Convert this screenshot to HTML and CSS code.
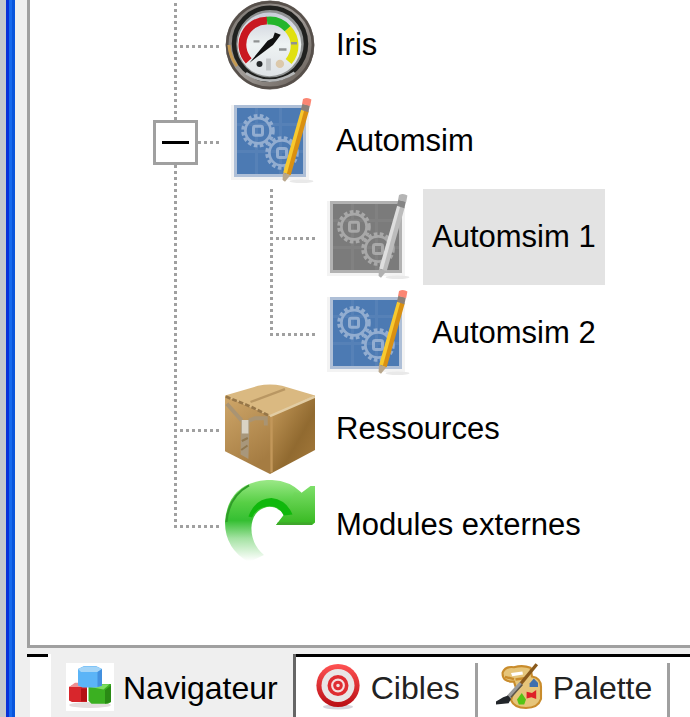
FILE: index.html
```
<!DOCTYPE html>
<html lang="fr">
<head>
  <meta charset="UTF-8" />
  <meta name="viewport" content="width=device-width, initial-scale=1.0"/>
  <title>Navigateur</title>
  <link rel="stylesheet" href="styles.css">
</head>
<body>

  <!-- Shared icon shapes -->
  <svg class="defs" width="0" height="0" aria-hidden="true">
    <symbol id="blueprint" viewBox="0 0 30 30">
      <path d="M2 3H28V28H2Z" fill="#f3f3f3"/>
      <rect class="sheet-edge" x="3" y="3" width="24" height="24"/>
      <rect class="sheet" x="4" y="4" width="22" height="22"/>
      <path class="sheet-grid" d="M10.5 4V26M18.5 4V26M4 9.5H26M4 18.5H26"/>
      <g class="gear">
        <circle cx="11" cy="11.6" r="5" stroke-width="1.2" stroke-dasharray="1.2 .8"/>
        <circle cx="11" cy="11.6" r="4.2" stroke-width=".9"/>
        <rect x="9.5" y="10.1" width="3" height="3" rx=".6" stroke-width="1"/>
        <circle cx="19" cy="19" r="5" stroke-width="1.2" stroke-dasharray="1.2 .8"/>
        <circle cx="19" cy="19" r="4.2" stroke-width=".9"/>
        <rect x="17.5" y="17.5" width="3" height="3" rx=".6" stroke-width="1"/>
      </g>
      <ellipse cx="25.5" cy="28.4" rx="4" ry=".6" fill="#e9e9e9"/>
      <path class="pencil-light" d="M25.4 4.5L27 5L21.3 26.2L19.4 25.5Z"/>
      <path class="pencil-dark" d="M26.4 4.8L27.9 5.2L21.9 26.4L20.6 26Z"/>
      <path class="pencil-tip" d="M19.3 25.5L21.8 26.4L20 28.6L19.2 28Z"/>
      <path class="ferrule" d="M25.8 2.6L28.3 3.2L27.8 5.4L25.3 4.6Z"/>
      <path class="eraser" d="M26 1Q27.5 .2 28.8 1.2L28.4 3.3L25.7 2.7Z"/>
    </symbol>
  </svg>

  <div class="window">
    <div class="frame"></div>
    <main class="content">
      <div class="panel">
        <ul class="tree">
          <li>
            <div class="row">
              <svg class="icon" viewBox="0 0 30 30" aria-hidden="true">
                <defs>
                  <linearGradient id="rim" x1="0" y1="0" x2="1" y2="1">
                    <stop offset="0" stop-color="#75706b"/>
                    <stop offset=".5" stop-color="#a09b97"/>
                    <stop offset="1" stop-color="#5e564f"/>
                  </linearGradient>
                  <linearGradient id="face" x1="0" y1="0" x2="0" y2="1">
                    <stop offset="0" stop-color="#c9ccd8"/>
                    <stop offset=".5" stop-color="#eef3f3"/>
                    <stop offset="1" stop-color="#dfe3e6"/>
                  </linearGradient>
                </defs>
                <circle cx="15" cy="15" r="14.8" fill="url(#rim)"/>
                <circle cx="15" cy="15" r="14.3" fill="none" stroke="#57504b" stroke-width=".9"/>
                <path d="M1.3 15Q1.6 19 4 22" fill="none" stroke="#c59a52" stroke-width="1"/>
                <circle cx="15" cy="14.6" r="12" fill="#8f9292" stroke="#20211f" stroke-width="1.5"/>
                <circle cx="14.8" cy="14.8" r="10.6" fill="url(#face)"/>
                <g fill="none" stroke-width="2.6">
                  <path d="M7.9 20.3A8 8 0 0 1 14 6.9" stroke="#c91820"/>
                  <path d="M14 6.9A8 8 0 0 1 20.9 9.6" stroke="#23b52b"/>
                  <path d="M20.9 9.6A8 8 0 0 1 21.2 20.5" stroke="#e0e010"/>
                </g>
                <path d="M22 14.4H24M18 16.5H20.5M9.5 13.8H11.5" stroke="#8f9292" stroke-width=".8"/>
                <path d="M8.2 20.9L14.2 13.6L16 12.6L16.6 10.8L18.6 11.6L17.4 13.2L16 15Z" fill="#111"/>
                <circle cx="11.5" cy="21.3" r="1" fill="#25292b"/>
                <path d="M14.5 19.5V23.5" stroke="#c2c6c8" stroke-width="1.6"/>
                <circle cx="18.3" cy="21.3" r="1.4" fill="#dcc9ab"/>
                <path d="M7 24.4Q15 29.5 23.2 24.2" fill="none" stroke="#b5b7b8" stroke-width=".9"/>
              </svg>
              <span class="label">Iris</span>
            </div>
          </li>
          <li>
            <div class="row">
              <button type="button" class="toggle" aria-label="Réduire Automsim" aria-expanded="true"></button>
              <svg class="icon" aria-hidden="true"><use href="#blueprint"/></svg>
              <span class="label">Automsim</span>
            </div>
            <ul>
              <li>
                <div class="row">
                  <svg class="icon disabled" aria-hidden="true"><use href="#blueprint"/></svg>
                  <span class="label selected">Automsim 1</span>
                </div>
              </li>
              <li>
                <div class="row">
                  <svg class="icon" aria-hidden="true"><use href="#blueprint"/></svg>
                  <span class="label">Automsim 2</span>
                </div>
              </li>
            </ul>
          </li>
          <li>
            <div class="row">
              <svg class="icon" viewBox="0 0 30 30" aria-hidden="true">
                <defs>
                  <linearGradient id="box-left" x1="0" y1="0" x2=".4" y2="1">
                    <stop offset="0" stop-color="#cfa76a"/>
                    <stop offset="1" stop-color="#a57c42"/>
                  </linearGradient>
                  <linearGradient id="box-right" x1="0" y1="0" x2="1" y2="1">
                    <stop offset="0" stop-color="#c89d5d"/>
                    <stop offset=".6" stop-color="#916a30"/>
                    <stop offset="1" stop-color="#a67b3c"/>
                  </linearGradient>
                </defs>
                <path d="M0 3.8L15 10.6V30L0 22.4Z" fill="url(#box-left)"/>
                <path d="M30 3.8L15 10.6V30L30 22Z" fill="url(#box-right)"/>
                <path d="M0 3.8L11 .6Q15 -.3 19 .6L30 3.8L15 10.7Z" fill="#dab981"/>
                <path d="M15 10.7L30 4.2" stroke="#e2cda4" stroke-width=".8"/>
                <path d="M15.5 11V29.5" stroke="#c2975a" stroke-width=".8"/>
                <path d="M8.5 6L20 1.7" stroke="#b99763" stroke-width=".8"/>
                <path d="M.3 4.2L8.7 7.6L14.5 10.5" fill="none" stroke="#967648" stroke-width=".9" stroke-dasharray="1.6 .7"/>
                <path d="M.6 6.6L5.6 12.2M8 12.2L10 11.4H13.6V13.8" fill="none" stroke="#a99473" stroke-width="1.3"/>
                <path d="M5.3 12H8.2L7.8 25L5.2 23.5Z" fill="#a8977b"/>
                <path d="M5.6 12H7.8V16.5H5.6Z" fill="#d9d3c5"/>
                <path d="M5.6 19L7.6 18M5.4 22L7.5 20.5" stroke="#8f7750" stroke-width=".7"/>
              </svg>
              <span class="label">Ressources</span>
            </div>
          </li>
          <li>
            <div class="row">
              <svg class="icon" viewBox="0 0 30 30" aria-hidden="true">
                <defs>
                  <linearGradient id="arrow" gradientUnits="userSpaceOnUse" x1="0" y1="0" x2="0" y2="27">
                    <stop offset="0" stop-color="#9be887"/>
                    <stop offset=".28" stop-color="#57cf45"/>
                    <stop offset=".5" stop-color="#35bf32"/>
                    <stop offset=".72" stop-color="#35bf32" stop-opacity=".45"/>
                    <stop offset="1" stop-color="#35bf32" stop-opacity="0"/>
                  </linearGradient>
                  <linearGradient id="arrow-head" x1="0" y1="0" x2="0" y2="1">
                    <stop offset="0" stop-color="#7edf6a"/>
                    <stop offset="1" stop-color="#35b81f"/>
                  </linearGradient>
                </defs>
                <path d="M25.5 4.2V15H17L19.6 11.6Q17.5 8.6 14 9Q9 10.3 8.8 16Q8.8 21.5 13 25L8 27.4Q0 23 0 14Q1 1 14 0Q21 -.3 25.5 4.2Z" fill="url(#arrow)"/>
                <path d="M25.3 4.4L28.5 2H30V14.2L29 15H17L20 11.6L23 4Z" fill="url(#arrow-head)"/>
                <path d="M7.8 12.2Q10 6.2 15.5 6Q20.5 6.6 22.5 11.5L19.6 11.8Q18 8.3 14 8.8Q10.5 9.2 9 12.5Z" fill="#10b80c"/>
                <path d="M.5 14Q1.2 5.5 8 1.8" fill="none" stroke="#2f9c28" stroke-width=".7"/>
                <path d="M17.5 14.6H29" stroke="#3fa62b" stroke-width=".8"/>
              </svg>
              <span class="label">Modules externes</span>
            </div>
          </li>
        </ul>
      </div>

      <nav class="tabs">
        <div class="tabs-start"></div>
        <button type="button" class="tab active">
          <svg class="tab-icon" viewBox="0 0 16 16" aria-hidden="true">
            <ellipse cx="8" cy="14" rx="7" ry="1" fill="#e4dede"/>
            <path d="M1 8L3 7H7V13H2L1 12.5Z" fill="#d8262c"/>
            <path d="M1 8L3 6.6H6V8Z" fill="#ee8f92"/>
            <path d="M5 8.5H7V12.8H5Z" fill="#b50f14"/>
            <path d="M7.5 8L9.5 7H15V13L14 13.6H8.5L7.5 12.6Z" fill="#3bb021"/>
            <path d="M8 8L9.5 7.1H14.5L12.5 8.8Z" fill="#7ddd62"/>
            <path d="M13 9L15 7.5V13L13 13.6Z" fill="#2a8a15"/>
            <path d="M4 2L6 1H10L12 2V7.6L10 8.2H5.5L4 7.5Z" fill="#5bb4f7"/>
            <path d="M4 2L6 1.2H10L12 2L10.5 3H5Z" fill="#a3d4f7"/>
            <path d="M10.5 3L12 2V7.6L10.5 8Z" fill="#4390df"/>
          </svg>
          Navigateur
        </button>
        <div class="tabs-rest">
          <button type="button" class="tab">
            <svg class="tab-icon" viewBox="0 0 16 16" aria-hidden="true">
              <defs>
                <linearGradient id="ring" x1="0" y1="0" x2="0" y2="1">
                  <stop offset="0" stop-color="#ff5353"/>
                  <stop offset="1" stop-color="#b90d14"/>
                </linearGradient>
              </defs>
              <ellipse cx="8" cy="14.6" rx="5" ry=".9" fill="#d5d5dc"/>
              <circle cx="8" cy="7.5" r="7.2" fill="url(#ring)"/>
              <circle cx="8" cy="7.5" r="5.5" fill="#e9e6e6"/>
              <circle cx="8" cy="7.5" r="2.9" fill="#f4dede" stroke="#df2c30" stroke-width="1.2"/>
              <circle cx="8" cy="7.5" r="1.1" fill="#f4dede" stroke="#df2c30" stroke-width="1"/>
            </svg>
            Cibles
          </button>
          <button type="button" class="tab">
            <svg class="tab-icon" viewBox="0 0 16 16" aria-hidden="true">
              <path d="M2.2 3.2Q3 1 6 1.4Q9 .6 11.5 1.6L12 4.5Q15 5 15 8V12Q14 15 10 15Q6 15 5 12.4Q5.6 10 6.8 8.8L6 6.2Q2 6.4 2.2 3.2Z" fill="#e6c57a" stroke="#c98c2c" stroke-width=".7"/>
              <path d="M5 3.3L8.8 2.8L9 3.8L5.4 4.4Z" fill="#fff"/>
              <path d="M6.5 5.5L10 5M3 4.6L6 5.4" stroke="#c98c2c" stroke-width=".8"/>
              <path d="M13.6 .4L8 7.2" stroke="#8a5a1c" stroke-width="1.1"/>
              <path d="M8.4 6.8L4.2 11.4" stroke="#9a9a9a" stroke-width="1.5"/>
              <path d="M8.8 7.2L5 11.4" stroke="#5d5648" stroke-width=".5"/>
              <path d="M0 13.8V12.8L2.4 11.4L4 10.8L5 12L4.2 13.4Z" fill="#22262a"/>
              <path d="M12.6 5.2L14 6.6V8H11.2V6.8Z" fill="#3f6fae"/>
              <path d="M10.2 9.6L12 10L13.4 9V12L11.8 11.4L10.2 11.8Z" fill="#de2128"/>
              <path d="M8.6 10L10 12.2L9.4 13.8H7.6L7 12.2Z" fill="#55c414"/>
            </svg>
            Palette
          </button>
        </div>
      </nav>
    </main>
  </div>

</body>
</html>
```
FILE: styles.css
```
* {
  box-sizing: border-box;
}

body {
  margin: 0;
  height: 100vh;
  overflow: hidden;
  background-color: #efefef;
  color: #000;
  font-family: "Liberation Sans", Arial, sans-serif;
}

.defs {
  position: absolute;
}

.window {
  display: flex;
  height: 100%;
}

/* Left window border */
.frame {
  flex: none;
  width: 15px;
  background: linear-gradient(to right, #c5c8cd 0 6px, #0831d9 6px 9px, #166aee 9px 12px, #0855dd 12px 15px);
}

.content {
  flex: 1;
  min-width: 0;
  display: flex;
  flex-direction: column;
  gap: 6px;
  padding-left: 12px;
}

.panel {
  flex: 1;
  min-height: 0;
  overflow: hidden;
  padding-left: 123px;
  background-color: #fff;
  border-left: 3px solid #a0a0a0;
  border-bottom: 3px solid #a0a0a0;
}

/* Tree */
.tree,
.tree ul {
  list-style: none;
  margin: 0;
  padding: 0;
}

.tree {
  margin-top: -3px;
}

.tree ul {
  margin-left: 96px;
}

/* dotted connectors: trunk first, branch second */
.tree li {
  background-image:
    repeating-linear-gradient(to bottom, #a0a0a0 0 3px, transparent 3px 6px),
    repeating-linear-gradient(to right, #a0a0a0 0 3px, transparent 3px 6px);
  background-position: 21px 0, 27px 48px;
  background-size: 3px 100%, 39px 3px;
  background-repeat: no-repeat;
}

.tree li:last-child {
  background-size: 3px 51px, 39px 3px;
}

.row {
  display: flex;
  align-items: center;
  height: 96px;
  padding-left: 72px;
}

.toggle {
  flex: none;
  width: 45px;
  height: 45px;
  margin: 3px 27px 0 -72px;
  padding: 0;
  border: 3px solid #a0a0a0;
  border-radius: 0;
  background: linear-gradient(#000, #000) center / 27px 3px no-repeat #fff;
  cursor: pointer;
}

.icon {
  flex: none;
  width: 90px;
  height: 90px;
  margin-right: 12px;
}

.label {
  display: flex;
  align-items: center;
  height: 96px;
  padding: 0 9px;
  font-size: 31px;
  line-height: 42px;
  white-space: nowrap;
}

.label.selected {
  background-color: #e3e3e3;
}

/* Blueprint icon colours */
.icon {
  --edge: #aebfd7;
  --sheet: #4c7ab3;
  --line: #9fb6d6;
  --light: #f8c92e;
  --dark: #d99012;
  --tip: #b9a78c;
  --ferrule: #8b8078;
  --eraser: #fb8673;
}

.icon.disabled {
  --edge: #b2b2b2;
  --sheet: #7b7b7b;
  --line: #b0b0b0;
  --light: #dedede;
  --dark: #bcbcbc;
  --tip: #b0b0b0;
  --ferrule: #858585;
  --eraser: #b5b5b5;
}

.sheet-edge { fill: var(--edge); }
.sheet { fill: var(--sheet); }
.sheet-grid { stroke: var(--line); stroke-width: 1; opacity: 0.12; }
.gear { fill: none; stroke: var(--line); opacity: 0.85; }
.pencil-light { fill: var(--light); }
.pencil-dark { fill: var(--dark); }
.pencil-tip { fill: var(--tip); }
.ferrule { fill: var(--ferrule); }
.eraser { fill: var(--eraser); }

/* Bottom tabs */
.tabs {
  flex: none;
  display: flex;
  height: 63px;
}

.tabs-start {
  flex: none;
  width: 21px;
  border-top: 3px solid #000;
  background: linear-gradient(to right, #efefef 0 3px, #fff 3px);
}

.tabs-rest {
  flex: 1;
  display: flex;
  padding-top: 6px;
  border-top: 3px solid #000;
  background-color: #fff;
}

.tab {
  flex: none;
  display: flex;
  align-items: flex-start;
  gap: 9px;
  padding: 0 15px 0 18px;
  border: 0;
  border-right: 3px solid #a0a0a0;
  border-radius: 0;
  background-color: #fff;
  color: #222;
  font-family: inherit;
  font-size: 32px;
  line-height: 50px;
  white-space: nowrap;
  cursor: pointer;
}

.tab.active {
  padding: 9px 15px 0;
  border-left: 3px solid #fff;
  border-right-color: #666;
  background-color: #efefef;
  color: #000;
}

.tab-icon {
  flex: none;
  width: 48px;
  height: 48px;
  background-color: #fff;
}
```
